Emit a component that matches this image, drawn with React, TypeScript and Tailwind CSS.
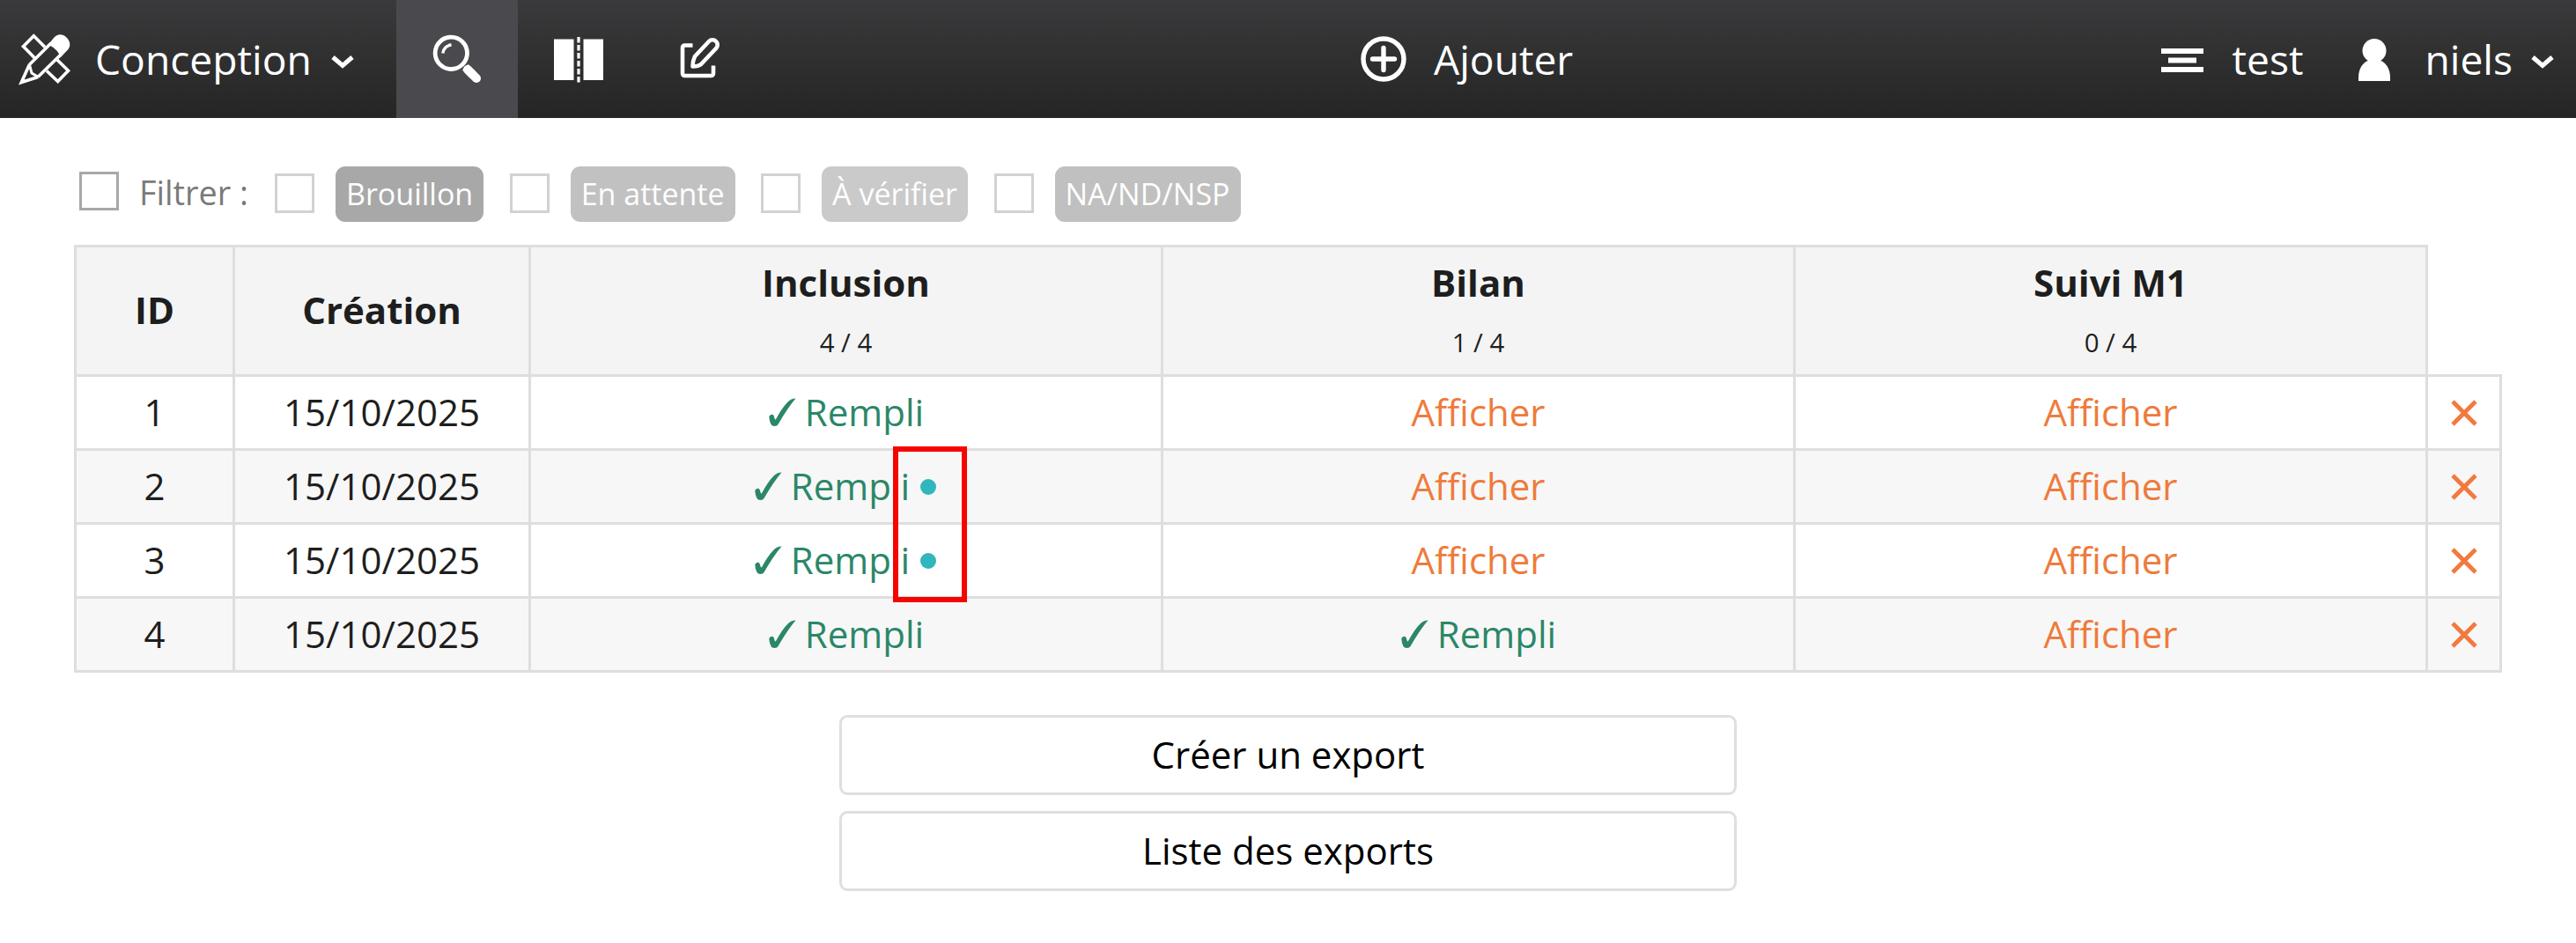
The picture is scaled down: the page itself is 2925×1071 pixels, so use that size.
import type { ReactNode } from "react";

function DesignIcon() {
  return (
    <svg viewBox="0 0 60 60" className="h-[60px] w-[60px] shrink-0" fill="none" stroke="white" strokeWidth="3.600">
      <path d="M18.500 29 5.500 15.700 17.300 3.800 30 16.500" />
      <path d="M32 43.500 44.700 55.500 56.500 43.300 44 31" />
      <path d="M12.300 36.500 37 12M22 50.500 48 25" />
      <path d="M34 13.500 40 6C44 1 50 1 54.500 5.500S59.500 15.500 56 19.500L47.500 28.500Q46 20 34 13.500Z" fill="white" stroke="none" />
      <path d="M12.300 36.500 3.300 56.500 22 50.500" strokeLinejoin="miter" />
      <path d="M12.300 36 15 46 22.500 50.500" strokeWidth="3" />
    </svg>
  );
}

function Chevron() {
  return (
    <svg viewBox="0 0 26 16" className="h-[16px] w-[26px] shrink-0" fill="none" stroke="white" strokeWidth="5">
      <path d="M2 3 13 12.500 24 3" />
    </svg>
  );
}

function SearchIcon() {
  return (
    <svg viewBox="0 0 60 60" className="h-[60px] w-[60px]" fill="none" stroke="white">
      <circle cx="23.300" cy="23.300" r="18.200" strokeWidth="4.800" />
      <path d="M13.800 23.500A10.500 10.500 0 0 1 23.500 14" strokeWidth="3.400" />
      <path d="M42 42 52 52" strokeWidth="10" strokeLinecap="round" />
      <path d="M36 42.500 42.500 36 51 44 44 51Z" fill="white" stroke="none" />
    </svg>
  );
}

function SplitIcon() {
  return (
    <svg viewBox="0 0 60 60" className="h-[60px] w-[60px]">
      <path d="M2 7.500H24.500V54H2ZM35.500 7.500H58V54H35.500Z" fill="white" />
      <path d="M30 5V57" stroke="white" strokeWidth="3.200" strokeDasharray="6.500 2.500" />
    </svg>
  );
}

function EditIcon() {
  return (
    <svg viewBox="0 0 60 60" className="h-[60px] w-[60px]" fill="none" stroke="white" strokeWidth="4.600">
      <path d="M21.500 14.500H12.500a2.500 2.500 0 0 0-2.500 2.500V46.500a2.500 2.500 0 0 0 2.500 2.500H42.500A2.500 2.500 0 0 0 45 46.500V37.500" />
      <path d="M40 10a5.500 5.500 0 0 1 8 0 5.500 5.500 0 0 1 0 8L31 36Q28 38.500 21.500 38.500 21.500 32 24 27Z" strokeLinejoin="round" />
    </svg>
  );
}

function PlusIcon() {
  return (
    <svg viewBox="0 0 52 52" className="h-[52px] w-[52px]" fill="none" stroke="white">
      <circle cx="26" cy="26" r="23" strokeWidth="5.400" />
      <path d="M26 13.500V38.500M13.500 26H38.500" strokeWidth="5.400" strokeLinecap="round" />
    </svg>
  );
}

function LinesIcon() {
  return (
    <svg viewBox="0 0 48 30" className="h-[30px] w-[48px]" fill="white">
      <path d="M0 2H48V8H0ZM8 12.500H40V18.500H8ZM0 23H48V29H0Z" />
    </svg>
  );
}

function UserIcon() {
  return (
    <svg viewBox="0 0 36 50" className="h-[50px] w-[36px]" fill="white">
      <circle cx="18" cy="15.500" r="13.500" />
      <path d="M0 50V46C0 36 5 28.500 12 26.500H24C31 28.500 36 36 36 46V50Z" />
    </svg>
  );
}

function Check() {
  return (
    <svg viewBox="0 0 31 32" className="mt-[1px] mr-[10px] ml-[1px] h-[32px] w-[31px] shrink-0" fill="currentColor">
      <path d="M30.500 0.500Q21.500 11 10.500 30Q9.500 32 6.500 32Q3.500 32 2.500 30Q0.500 26 0.300 21.500Q1 18.800 4 18.800Q5.500 18.800 6.300 22.500Q6.900 25 7.800 24.500Q15 11 21.500 4.500Q25.500 .5 30.500 0.500Z" />
    </svg>
  );
}

function Cross() {
  return (
    <svg viewBox="0 0 30 30" className="mx-auto mt-[1px] h-[30px] w-[30px]" fill="none" stroke="#f27a3f" strokeWidth="4.800">
      <path d="M2 2 28 28M28 2 2 28" />
    </svg>
  );
}

function Navbar() {
  return (
    <nav className="flex h-[134px] items-center bg-linear-to-b from-[#3a3a3c] to-[#252525] text-[46.2px] leading-none text-white">
      <button className="flex h-full w-[450px] items-center pl-[21px]">
        <DesignIcon />
        <span className="mt-[2px] ml-[27px]">Conception</span>
        <span className="ml-auto mr-[48px] mt-[6px]"><Chevron /></span>
      </button>
      <button className="flex h-full w-[138px] items-center justify-center bg-[#4a494d]"><SearchIcon /></button>
      <button className="flex h-full w-[138px] items-center justify-center"><SplitIcon /></button>
      <button className="flex h-full w-[138px] items-center justify-center"><EditIcon /></button>
      <button className="ml-[681px] flex items-center gap-[31px]">
        <PlusIcon />
        <span className="mt-[2px]">Ajouter</span>
      </button>
      <button className="ml-auto flex items-center gap-[33px]">
        <span className="pt-[3px]"><LinesIcon /></span>
        <span className="mt-[2px]">test</span>
      </button>
      <button className="ml-[63px] mr-[25px] flex items-center">
        <UserIcon />
        <span className="mt-[2px] ml-[39px]">niels</span>
        <span className="ml-[21px] mt-[6px]"><Chevron /></span>
      </button>
    </nav>
  );
}

const filters = [
  { label: "Brouillon", tone: "bg-[#a8a8a8]" },
  { label: "En attente", tone: "bg-[#c1c1c1]" },
  { label: "À vérifier", tone: "bg-[#cacaca]" },
  { label: "NA/ND/NSP", tone: "bg-[#c0c0c0]" },
];

function Filters() {
  return (
    <div className="flex h-[63px] items-center pl-[90px]">
      <label className="-mt-[7px] flex w-[222px] items-center text-[37.8px] leading-none text-[#7a7a7a]">
        <span className="h-[44px] w-[45px] border-3 border-[#a8a8a8]" />
        <span className="ml-[23px] mt-[4px]">Filtrer :</span>
      </label>
      {filters.map((f) => (
        <label key={f.label} className="mr-[29.500px] flex items-center gap-[24px]">
          <span className="-mt-[2px] h-[45px] w-[45px] border-3 border-[#d2d2d2]" />
          <span className={`flex h-[63px] items-center rounded-[11px] px-[12px] pb-[2px] text-[34px] leading-none text-white ${f.tone}`}>
            {f.label}
          </span>
        </label>
      ))}
    </div>
  );
}

function Filled({ dot = false }: { dot?: boolean }) {
  return (
    <span className="flex items-center justify-center text-[#2b8768]">
      <Check />
      <span>Rempli</span>
      {dot ? (
        <span className="mr-[2px] ml-[12px] mt-[2px] h-[18px] w-[18px] rounded-full bg-[#30b6bd]" />
      ) : null}
    </span>
  );
}

function Show() {
  return <span className="text-[#ee7b3c]">Afficher</span>;
}

const rows: { id: number; cells: ReactNode[] }[] = [
  { id: 1, cells: [<Filled />, <Show />, <Show />] },
  { id: 2, cells: [<Filled dot />, <Show />, <Show />] },
  { id: 3, cells: [<Filled dot />, <Show />, <Show />] },
  { id: 4, cells: [<Filled />, <Filled />, <Show />] },
];

const forms = [
  { name: "Inclusion", count: "4 / 4" },
  { name: "Bilan", count: "1 / 4" },
  { name: "Suivi M1", count: "0 / 4" },
];

function Records() {
  return (
    <div className="relative ml-[84px] w-[2757px]">
      <table className="w-full table-fixed border-separate border-spacing-0 text-center text-[42px] leading-[57px] text-[#1e1e1e]">
        <colgroup>
          <col className="w-[183px]" />
          <col className="w-[336px]" />
          <col className="w-[718px]" />
          <col className="w-[718px]" />
          <col className="w-[718px]" />
          <col className="w-[84px]" />
        </colgroup>
        <thead>
          <tr className="h-[150px]">
            <th className="border-3 border-[#dedede] bg-[#f4f4f4] p-0 pb-[4px]">ID</th>
            <th className="border-3 border-l-0 border-[#dedede] bg-[#f4f4f4] p-0 pb-[4px]">Création</th>
            {forms.map((f) => (
              <th key={f.name} className="border-3 border-l-0 border-[#dedede] bg-[#f4f4f4] p-0">
                <div className="-mt-[2px]">{f.name}</div>
                <div className="mt-[16px] text-[29.4px] leading-[48px] font-normal">{f.count}</div>
              </th>
            ))}
            <th className="border-b-3 border-[#dedede] p-0" />
          </tr>
        </thead>
        <tbody>
          {rows.map((r) => (
            <tr key={r.id} className="h-[84px] even:bg-[#f7f7f7]">
              <td className="border-x-3 border-b-3 border-[#dedede] p-0 pb-[2px]">{r.id}</td>
              <td className="border-r-3 border-b-3 border-[#dedede] p-0 pb-[2px]">15/10/2025</td>
              {r.cells.map((c, i) => (
                <td key={i} className="border-r-3 border-b-3 border-[#dedede] p-0 pb-[2px]">{c}</td>
              ))}
              <td className="border-r-3 border-b-3 border-[#dedede] p-0"><Cross /></td>
            </tr>
          ))}
        </tbody>
      </table>
      <div className="absolute left-[930px] top-[229px] h-[177px] w-[84px] border-6 border-[#f50400]" />
    </div>
  );
}

export default function App() {
  return (
    <div className="h-[1071px] w-[2925px] overflow-hidden bg-white font-['Open_Sans',sans-serif]">
      <Navbar />
      <main className="flex flex-col pt-[55px]">
        <Filters />
        <div className="mt-[26px]">
          <Records />
        </div>
        <div className="ml-[953px] mt-[48px] flex w-[1019px] flex-col gap-[18px] text-[42px] leading-none text-black">
          <button className="h-[91px] rounded-[9px] border-3 border-[#dfdfdf] bg-white pb-[2px]">Créer un export</button>
          <button className="h-[91px] rounded-[9px] border-3 border-[#dfdfdf] bg-white pb-[2px]">Liste des exports</button>
        </div>
      </main>
    </div>
  );
}
